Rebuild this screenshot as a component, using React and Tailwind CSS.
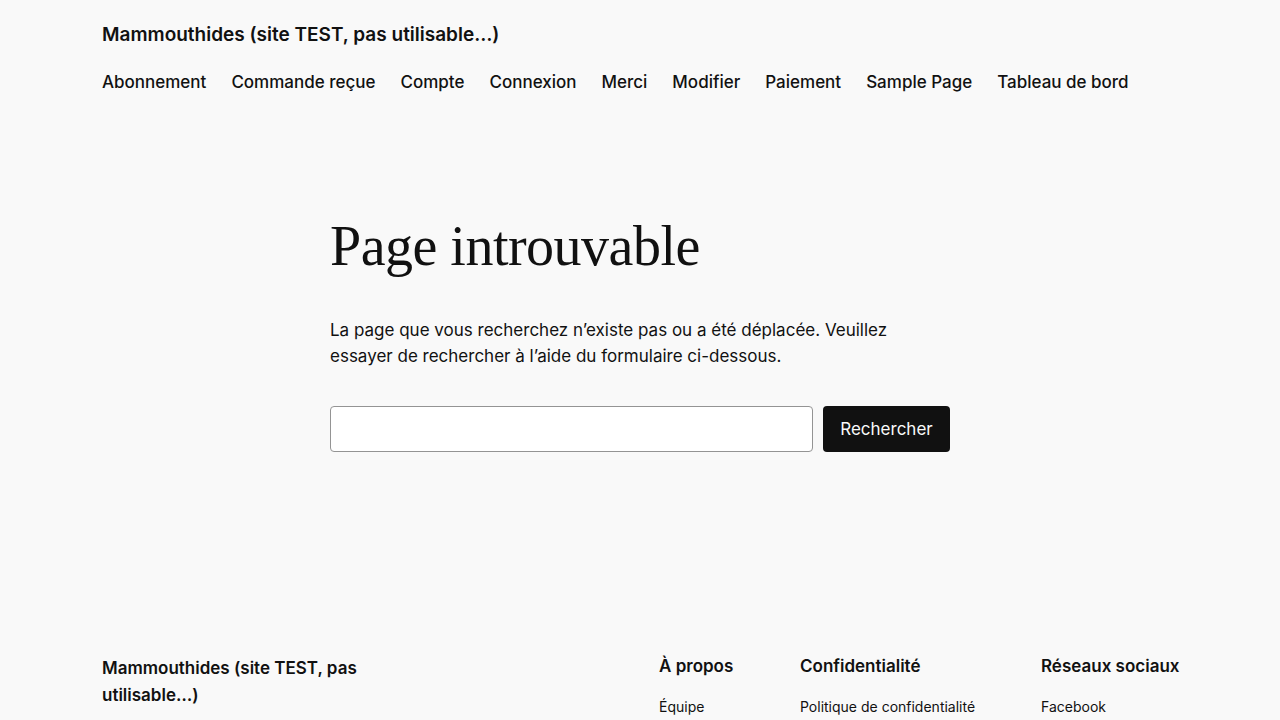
import React from 'react';

const navLinks = [
  'Abonnement',
  'Commande reçue',
  'Compte',
  'Connexion',
  'Merci',
  'Modifier',
  'Paiement',
  'Sample Page',
  'Tableau de bord',
];

const footerCols = [
  { title: 'À propos', links: ['Équipe'], w: 'w-[141px]' },
  { title: 'Confidentialité', links: ['Politique de confidentialité'], w: 'w-[241px]' },
  { title: 'Réseaux sociaux', links: ['Facebook'], w: '' },
];

export default function App() {
  return (
    <div className="min-h-[720px] bg-[#f9f9f9] text-[#111111] font-['Inter',sans-serif] overflow-hidden">
      {/* Header */}
      <header className="px-[102px] pt-[23px]">
        <div className="text-[19px] font-semibold leading-[24px]">
          Mammouthides (site TEST, pas utilisable…)
        </div>
        <nav className="mt-[23px] flex gap-[25px] text-[17px] font-medium leading-[24px]">
          {navLinks.map((l) => (
            <a key={l} href="#" className="text-[#111111]">
              {l}
            </a>
          ))}
        </nav>
      </header>

      {/* Main */}
      <main className="mx-auto w-[620px] pt-[116px]">
        <h1 className="font-['Liberation_Serif',serif] text-[56px] leading-[72px] tracking-[-0.5px]">
          Page introuvable
        </h1>
        <p className="mt-[35px] text-[17px] leading-[26px]">
          La page que vous recherchez n’existe pas ou a été déplacée. Veuillez essayer de rechercher à l’aide du formulaire ci-dessous.
        </p>
        <form className="mt-[37px] flex gap-[10px]" onSubmit={(e) => e.preventDefault()}>
          <input
            type="search"
            className="h-[46px] flex-1 rounded-[4px] border border-[#949494] bg-white px-3 text-[17px] outline-none"
          />
          <button
            type="submit"
            className="h-[46px] w-[127px] rounded-[4px] bg-[#111111] pt-[1px] text-[17px] text-[#f9f9f9]"
          >
            Rechercher
          </button>
        </form>
      </main>

      {/* Footer */}
      <footer className="mt-[203px] flex px-[102px]">
        <div className="w-[557px] flex-none text-[17px] font-semibold leading-[27px] pr-[300px]">
          Mammouthides (site TEST, pas utilisable…)
        </div>
        <div className="flex flex-none">
          {footerCols.map((c) => (
            <div key={c.title} className={`${c.w} flex-none whitespace-nowrap`}>
              <div className="text-[17px] font-semibold leading-[24px] -mt-[1px]">{c.title}</div>
              <div className="mt-[19px] text-[14px] leading-[20px]">
                {c.links.map((l) => (
                  <a key={l} href="#" className="block">
                    {l}
                  </a>
                ))}
              </div>
            </div>
          ))}
        </div>
      </footer>
    </div>
  );
}
